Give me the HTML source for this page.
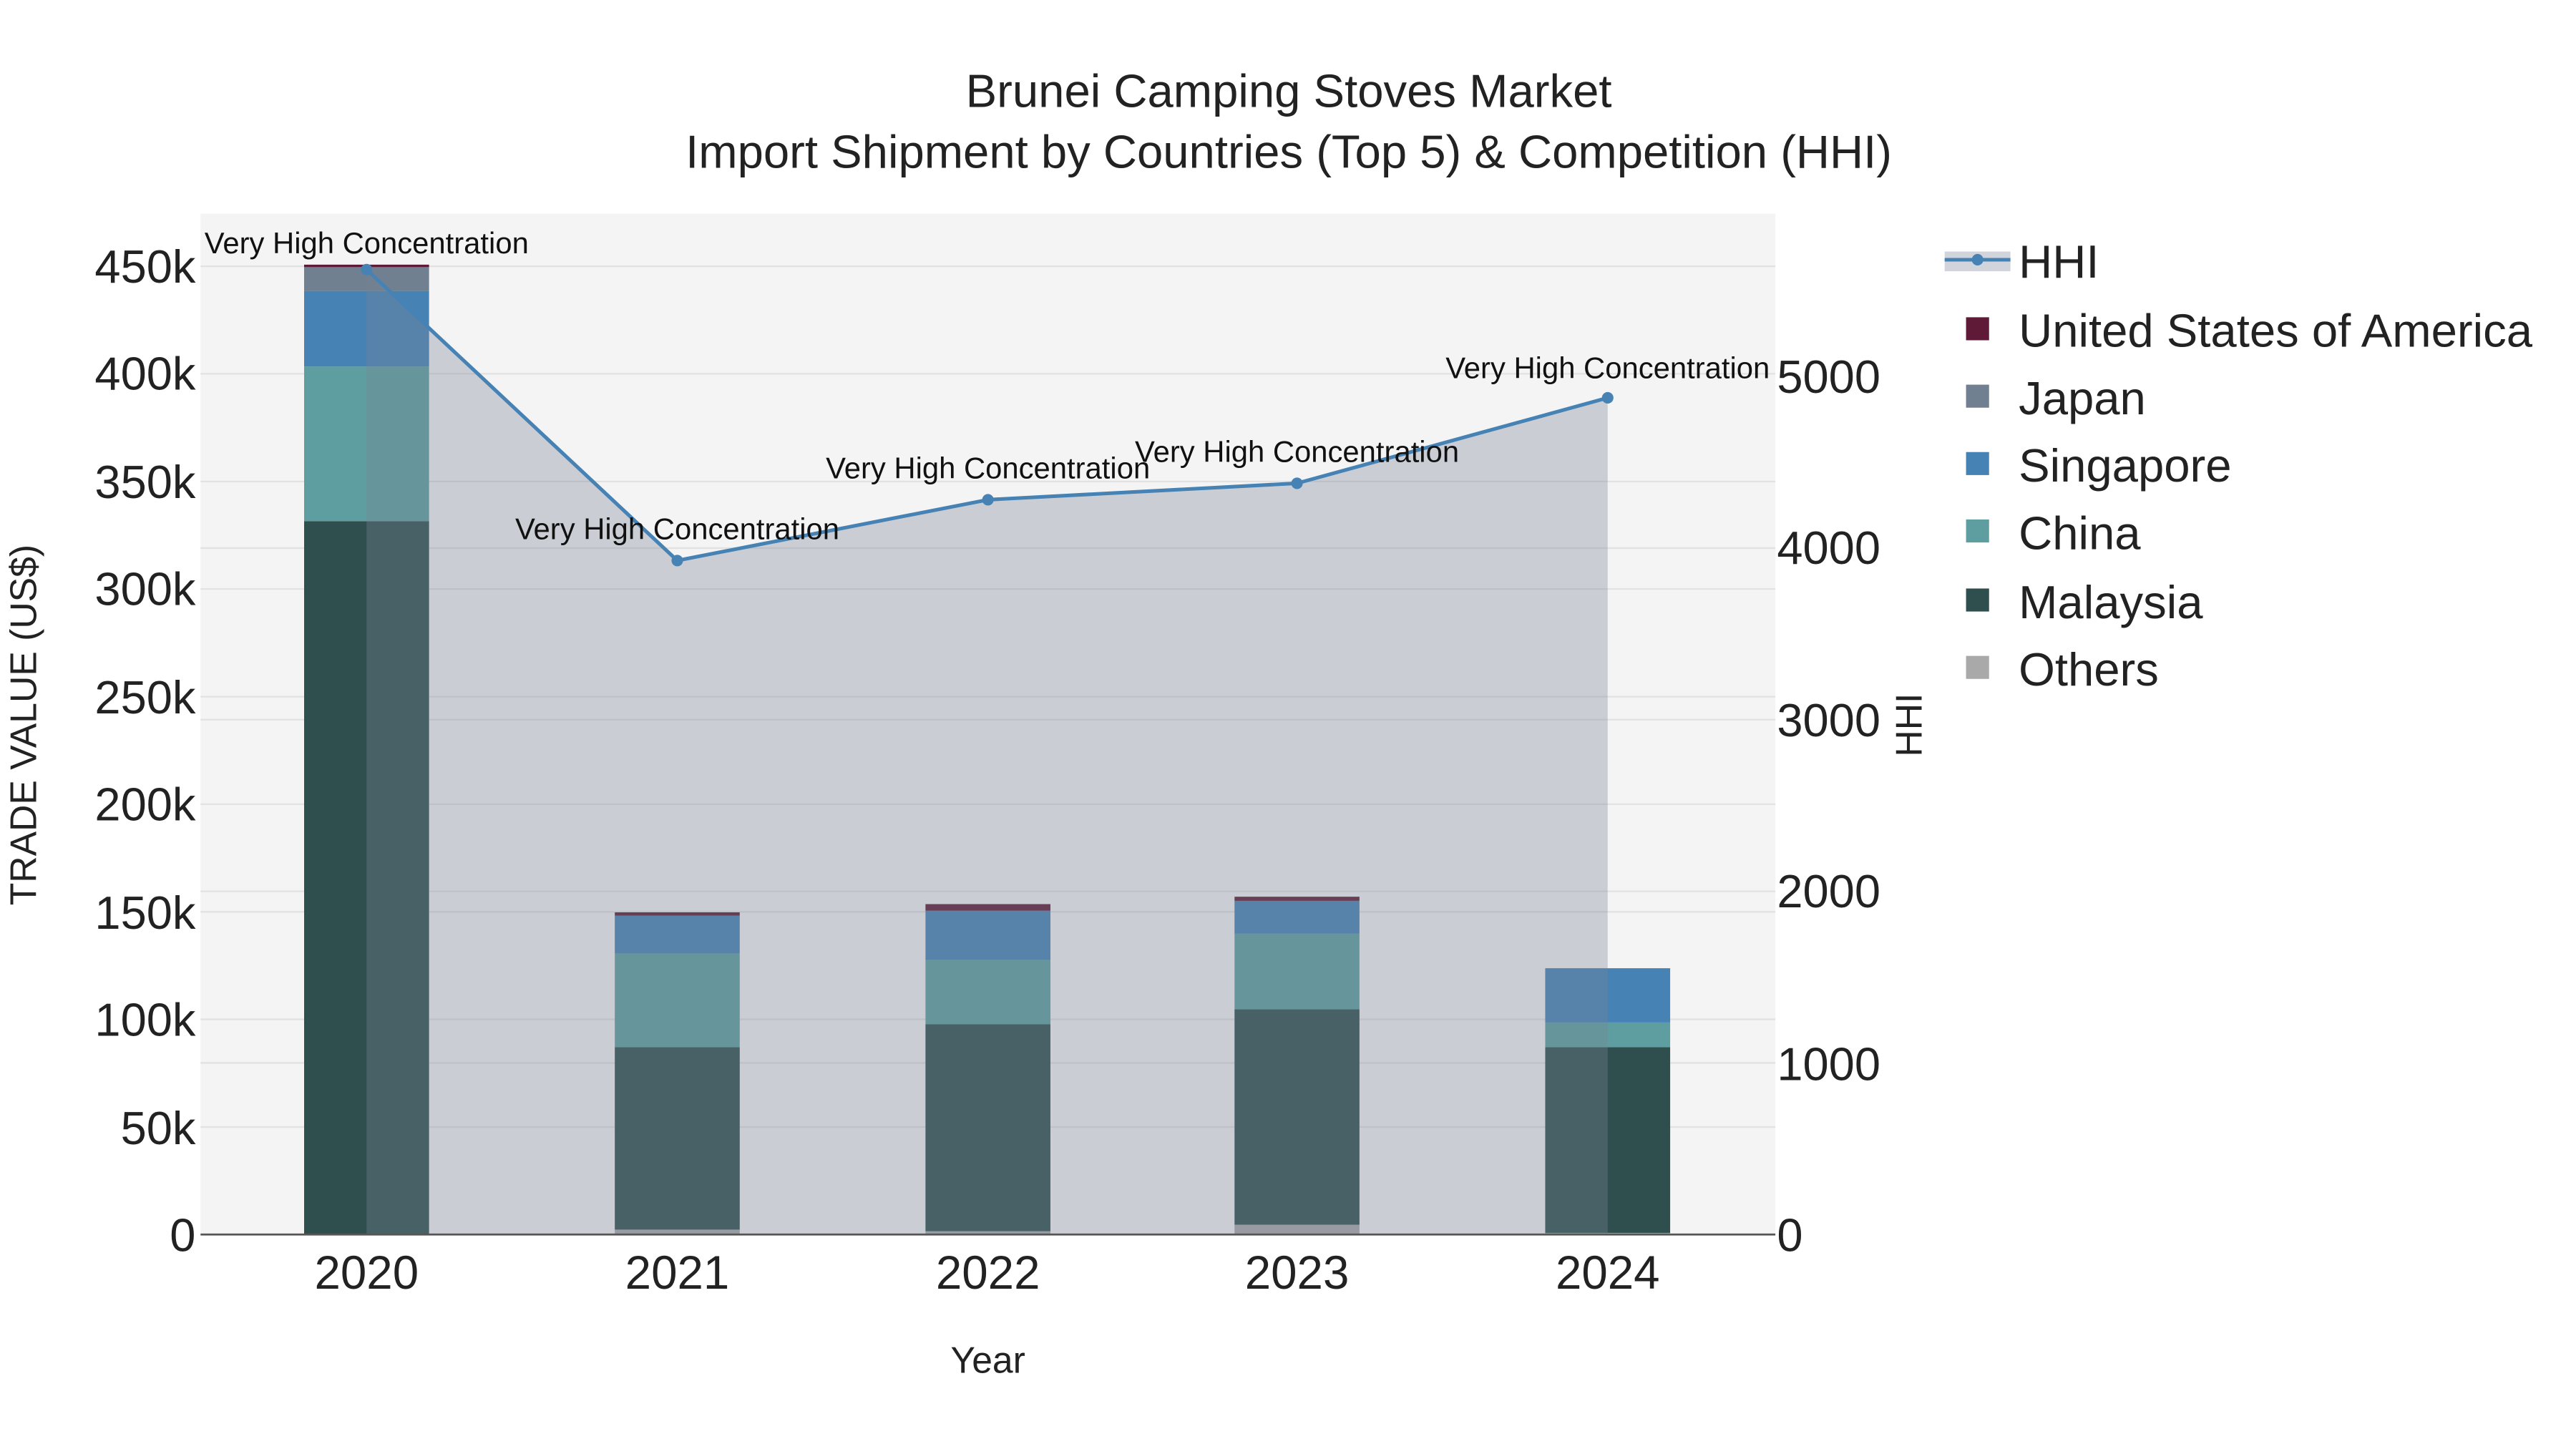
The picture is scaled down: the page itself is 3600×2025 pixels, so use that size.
<!DOCTYPE html>
<html><head><meta charset="utf-8"><style>
html,body{margin:0;padding:0;background:#fff;}
svg{display:block;}
text{font-family:"Liberation Sans",Arial,sans-serif;}
</style></head><body>
<svg width="3600" height="2025" viewBox="0 0 1560 877.5" xmlns="http://www.w3.org/2000/svg">
<rect x="0" y="0" width="1560" height="877.5" fill="#fff"/>
<g transform="scale(0.9955)">
<rect x="122" y="130" width="958" height="621" fill="#f4f4f4"/>
<g stroke="#e2e2e2" stroke-width="1">
<line x1="122" x2="1080" y1="685.6" y2="685.6"/><line x1="122" x2="1080" y1="620.1" y2="620.1"/>
<line x1="122" x2="1080" y1="554.7" y2="554.7"/><line x1="122" x2="1080" y1="489.2" y2="489.2"/>
<line x1="122" x2="1080" y1="423.8" y2="423.8"/><line x1="122" x2="1080" y1="358.3" y2="358.3"/>
<line x1="122" x2="1080" y1="292.9" y2="292.9"/><line x1="122" x2="1080" y1="227.4" y2="227.4"/>
<line x1="122" x2="1080" y1="162" y2="162"/>
<line x1="122" x2="1080" y1="646.6" y2="646.6"/><line x1="122" x2="1080" y1="542.2" y2="542.2"/>
<line x1="122" x2="1080" y1="437.8" y2="437.8"/><line x1="122" x2="1080" y1="333.4" y2="333.4"/>
</g>
<g>
<rect x="185" y="317" width="76" height="434" fill="#2f4f4f"/>
<rect x="185" y="223" width="76" height="94" fill="#5f9ea0"/>
<rect x="185" y="177" width="76" height="46" fill="#4682b4"/>
<rect x="185" y="162.5" width="76" height="14.5" fill="#708090"/>
<rect x="185" y="161" width="76" height="1.5" fill="#5e1a36"/>
<rect x="374" y="748" width="76" height="3" fill="#a9a9a9"/>
<rect x="374" y="637" width="76" height="111" fill="#2f4f4f"/>
<rect x="374" y="580" width="76" height="57" fill="#5f9ea0"/>
<rect x="374" y="557" width="76" height="23" fill="#4682b4"/>
<rect x="374" y="555" width="76" height="2" fill="#5e1a36"/>
<rect x="563" y="749" width="76" height="2" fill="#a9a9a9"/>
<rect x="563" y="623" width="76" height="126" fill="#2f4f4f"/>
<rect x="563" y="584" width="76" height="39" fill="#5f9ea0"/>
<rect x="563" y="554" width="76" height="30" fill="#4682b4"/>
<rect x="563" y="550" width="76" height="4" fill="#5e1a36"/>
<rect x="751" y="745" width="76" height="6" fill="#a9a9a9"/>
<rect x="751" y="614" width="76" height="131" fill="#2f4f4f"/>
<rect x="751" y="568" width="76" height="46" fill="#5f9ea0"/>
<rect x="751" y="548" width="76" height="20" fill="#4682b4"/>
<rect x="751" y="545.5" width="76" height="2.5" fill="#5e1a36"/>
<rect x="940" y="750" width="76" height="1" fill="#a9a9a9"/>
<rect x="940" y="637" width="76" height="113" fill="#2f4f4f"/>
<rect x="940" y="622" width="76" height="15" fill="#5f9ea0"/>
<rect x="940" y="589" width="76" height="33" fill="#4682b4"/>
</g>
<path d="M223,164 L412,341 L601,304 L789,294 L978,242 L978,751 L223,751 Z" fill="rgba(120,132,150,0.34)"/>
<polyline points="223,164 412,341 601,304 789,294 978,242" fill="none" stroke="#4682b4" stroke-width="2.2"/>
<g fill="#4682b4"><circle cx="223" cy="164" r="3.5"/><circle cx="412" cy="341" r="3.5"/><circle cx="601" cy="304" r="3.5"/><circle cx="789" cy="294" r="3.5"/><circle cx="978" cy="242" r="3.5"/></g>
<line x1="122" x2="1080" y1="751" y2="751" stroke="#555" stroke-width="1.2"/>
<g font-size="18.2" fill="#111" text-anchor="middle">
<text x="223" y="154">Very High Concentration</text>
<text x="412" y="328">Very High Concentration</text>
<text x="601" y="291">Very High Concentration</text>
<text x="789" y="281">Very High Concentration</text>
<text x="978" y="230">Very High Concentration</text>
</g>
<g font-size="28.4" fill="#222" text-anchor="middle">
<text x="784" y="65">Brunei Camping Stoves Market</text>
<text x="784" y="102">Import Shipment by Countries (Top 5) &amp; Competition (HHI)</text>
</g>
<g font-size="28.3" fill="#222" text-anchor="end">
<text x="119" y="761">0</text><text x="119" y="696">50k</text><text x="119" y="630">100k</text>
<text x="119" y="565">150k</text><text x="119" y="499">200k</text><text x="119" y="434">250k</text>
<text x="119" y="368">300k</text><text x="119" y="303">350k</text><text x="119" y="237">400k</text>
<text x="119" y="172">450k</text>
</g>
<g font-size="28.3" fill="#222" text-anchor="start">
<text x="1081" y="761">0</text><text x="1081" y="657">1000</text><text x="1081" y="552">2000</text>
<text x="1081" y="448">3000</text><text x="1081" y="343">4000</text><text x="1081" y="239">5000</text>
</g>
<g font-size="28.5" fill="#222" text-anchor="middle">
<text x="223" y="784">2020</text><text x="412" y="784">2021</text><text x="601" y="784">2022</text>
<text x="789" y="784">2023</text><text x="978" y="784">2024</text>
</g>
<text x="601" y="835" font-size="22.5" fill="#222" text-anchor="middle">Year</text>
<text transform="translate(22,441) rotate(-90)" font-size="22.5" fill="#222" text-anchor="middle">TRADE VALUE (US$)</text>
<text transform="translate(1169,441) rotate(-90)" font-size="22.5" fill="#222" text-anchor="middle">HHI</text>
<rect x="1183" y="153" width="40" height="12" fill="rgba(120,132,150,0.34)"/>
<line x1="1183" x2="1223" y1="158" y2="158" stroke="#4682b4" stroke-width="2.2"/>
<circle cx="1203" cy="158" r="3.5" fill="#4682b4"/>
<rect x="1196" y="193" width="14" height="14" fill="#5e1a36"/>
<rect x="1196" y="234" width="14" height="14" fill="#708090"/>
<rect x="1196" y="275" width="14" height="14" fill="#4682b4"/>
<rect x="1196" y="316" width="14" height="14" fill="#5f9ea0"/>
<rect x="1196" y="358" width="14" height="14" fill="#2f4f4f"/>
<rect x="1196" y="399" width="14" height="14" fill="#a9a9a9"/>
<g font-size="28.4" fill="#222">
<text x="1228" y="169">HHI</text>
<text x="1228" y="211">United States of America</text>
<text x="1228" y="252">Japan</text>
<text x="1228" y="293">Singapore</text>
<text x="1228" y="334">China</text>
<text x="1228" y="376">Malaysia</text>
<text x="1228" y="417">Others</text>
</g>
</g>
</svg>
</body></html>
